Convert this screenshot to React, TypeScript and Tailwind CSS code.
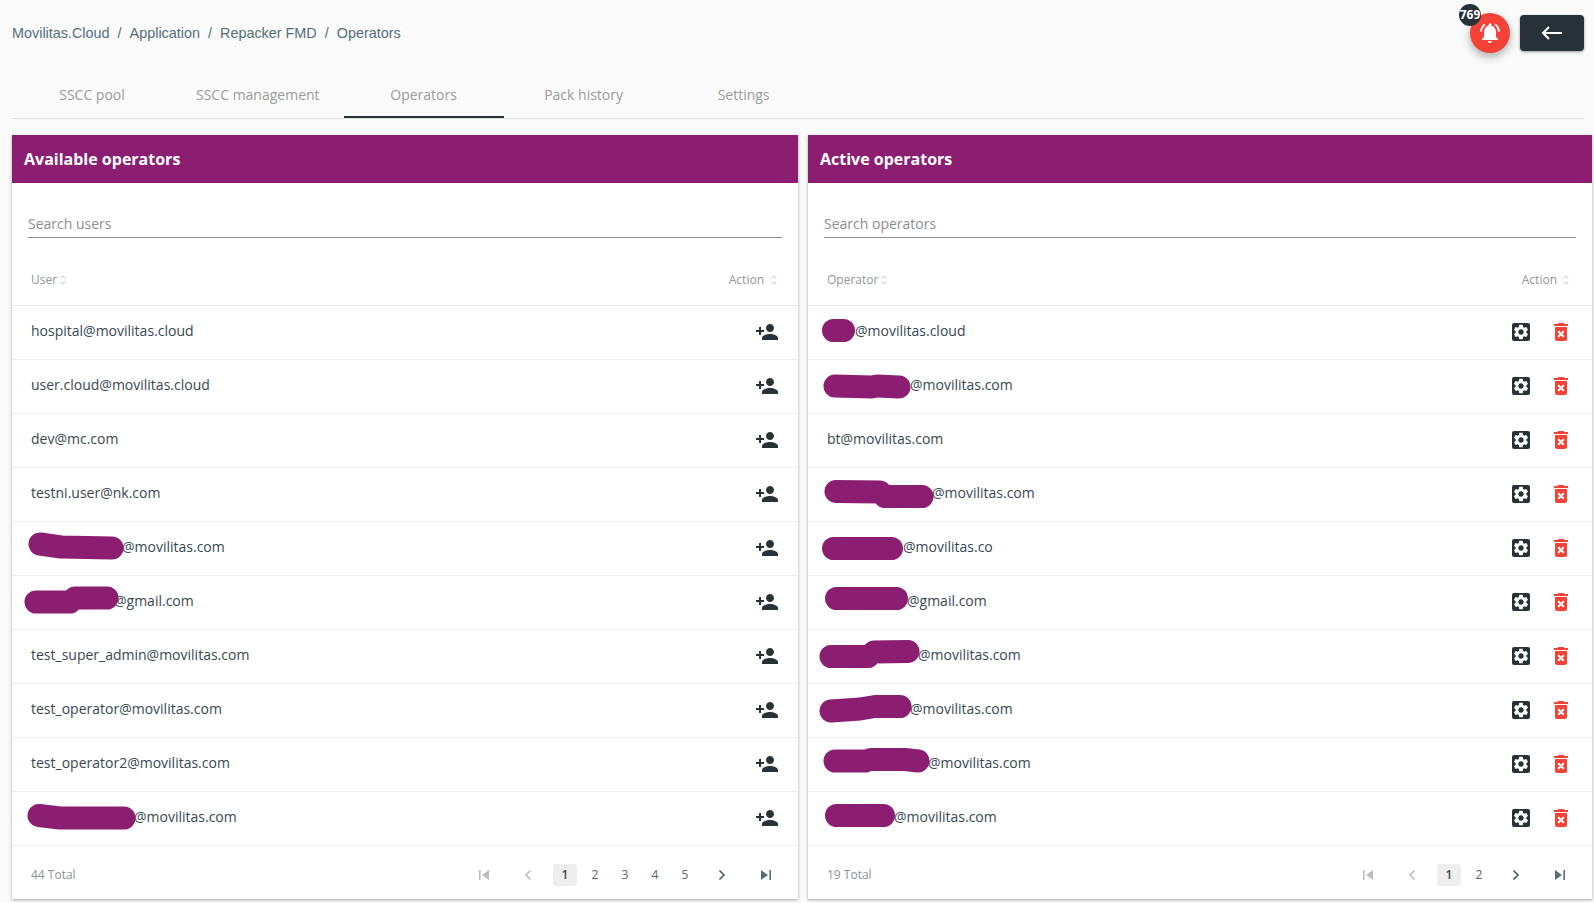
import { MdDeleteForever, MdNotificationsActive, MdPersonAdd, MdSettings } from "react-icons/md";

type Row = { domain: string; name?: string; width?: number; scribble?: string };

const availableUsers: Row[] = [
    { name: "hospital", domain: "@movilitas.cloud" },
    { name: "user.cloud", domain: "@movilitas.cloud" },
    { name: "dev", domain: "@mc.com" },
    { name: "testni.user", domain: "@nk.com" },
    { width: 91, scribble: "M9 9L30 12L81 13", domain: "@movilitas.com" },
    { width: 83, scribble: "M5 13L39 13M44 9L76 9", domain: "@gmail.com" },
    { name: "test_super_admin", domain: "@movilitas.com" },
    { name: "test_operator", domain: "@movilitas.com" },
    { name: "test_operator2", domain: "@movilitas.com" },
    { width: 103, scribble: "M8 10.5L29 13L93 13", domain: "@movilitas.com" },
];

const activeOperators: Row[] = [
    { width: 28, scribble: "M6.5 11.5L16.5 11.5", domain: "@movilitas.cloud" },
    { width: 83, scribble: "M8 13L45 14M50 13L72 14", domain: "@movilitas.com" },
    { name: "bt", domain: "@movilitas.com" },
    { width: 105, scribble: "M9 10.5L53 11M58 15.5L95 15.5", domain: "@movilitas.com" },
    { width: 76, scribble: "M6.5 13.5L64.5 13.5", domain: "@movilitas.co" },
    { width: 80, scribble: "M9.5 9.5L69.5 9.5", domain: "@gmail.com" },
    { width: 91, scribble: "M4 13.5L41 13.5M47 9L81 8.5", domain: "@movilitas.com" },
    { width: 83, scribble: "M4 14L33 12L48 9.5L73 9.5", domain: "@movilitas.com" },
    { width: 101, scribble: "M8 10L38 10M44 8.5L78 8.5L91 10", domain: "@movilitas.com" },
    { width: 67, scribble: "M9.5 10.5L56.5 10.5", domain: "@movilitas.com" },
];

function SortIcon() {
    return (
        <svg width="6" height="10" viewBox="0 0 6 10" fill="none" stroke="#bdbdbd" strokeWidth="1">
            <path d="M.8 3.5L3 1.2L5.2 3.5" />
            <path d="M.8 6.5L3 8.8L5.2 6.5" />
        </svg>
    );
}

function Email({ row }: { row: Row }) {
    return (
        <div className="flex items-center text-[14px] text-[#37474f]">
            <span className="order-2">{row.name}{row.domain}</span>
            {row.scribble && (
                <svg width={row.width} height="24" className="order-1 relative z-10 shrink-0 overflow-visible" fill="none">
                    <path d={row.scribble} stroke="#8b1e70" strokeWidth="23" strokeLinecap="round" strokeLinejoin="round" />
                </svg>
            )}
        </div>
    );
}

function Pager({ pages }: { pages: number[] }) {
    return (
        <div className="flex items-center">
            <button className="w-6 h-[22px] mr-5 flex items-center justify-center">
                <svg width="12" height="12" viewBox="0 0 12 12" fill="#bdbdbd"><path d="M1 1h1.6v10H1zM11 1v10L4 6z" /></svg>
            </button>
            <button className="w-6 h-[22px] mr-[13px] flex items-center justify-center">
                <svg width="10" height="12" viewBox="0 0 10 12" fill="none" stroke="#bdbdbd" strokeWidth="1.6"><path d="M7.5 1.5L3 6l4.5 4.5" /></svg>
            </button>
            <div className="flex items-center gap-[6px] text-[12px] text-[#616161]">
                {pages.map((p) => (
                    <span
                        key={p}
                        className={
                            p === 1
                                ? "w-6 h-[22px] flex items-center justify-center rounded-[3px] bg-[#eeeeee] text-[#37474f] font-semibold"
                                : "w-6 h-[22px] flex items-center justify-center"
                        }
                    >
                        {p}
                    </span>
                ))}
            </div>
            <button className="w-6 h-[22px] ml-[13px] flex items-center justify-center">
                <svg width="10" height="12" viewBox="0 0 10 12" fill="none" stroke="#455a64" strokeWidth="1.6"><path d="M2.5 1.5L7 6l-4.5 4.5" /></svg>
            </button>
            <button className="w-6 h-[22px] ml-5 flex items-center justify-center">
                <svg width="12" height="12" viewBox="0 0 12 12" fill="#546e7a"><path d="M9.4 1H11v10H9.4zM1 1v10l7-5z" /></svg>
            </button>
        </div>
    );
}

function Panel({
    title,
    placeholder,
    column,
    rows,
    total,
    pages,
    widthClass,
    actions,
    actionHeadClass,
}: {
    title: string;
    placeholder: string;
    column: string;
    rows: Row[];
    total: string;
    pages: number[];
    widthClass: string;
    actions: React.ReactNode;
    actionHeadClass: string;
}) {
    return (
        <section className={`${widthClass} bg-white shadow-[0_1px_3px_rgba(0,0,0,0.35)]`}>
            <div className="h-12 pl-3 flex items-center bg-[#8b1e70] text-white text-[16px] font-bold">{title}</div>

            <div className="h-[55px] mx-4 flex items-end">
                <div className="w-full pb-[3px] border-b border-[#8a8a8a] text-[14px] text-[#8d8d8d]">{placeholder}</div>
            </div>

            <div className="h-[68px] pt-[17px] flex items-center justify-between pl-[19px] border-b border-[#e4e4e4] text-[12px] text-[#90979b]">
                <div className="flex items-center gap-[3px]">{column}<SortIcon /></div>
                <div className={`flex items-center ${actionHeadClass}`}>Action<SortIcon /></div>
            </div>

            {rows.map((row, i) => (
                <div key={i} className="h-[54px] pb-1 px-[19px] flex items-center justify-between border-b border-[#eeeeee]">
                    <Email row={row} />
                    <div className="flex items-center pt-[2px]">{actions}</div>
                </div>
            ))}

            <div className="h-[53px] pt-1 pl-[19px] pr-5 flex items-center justify-between">
                <span className="text-[12px] text-[#8a9299]">{total}</span>
                <Pager pages={pages} />
            </div>
        </section>
    );
}

export default function App() {
    const tabs = ["SSCC pool", "SSCC management", "Operators", "Pack history", "Settings"];

    return (
        <div className="min-h-screen bg-[#fafafa] pl-3 pr-[2px] font-['Open_Sans',sans-serif]">
            {/* Top bar */}
            <header className="h-[66px] pr-2 flex items-center justify-between">
                <nav className="pt-[2px] flex items-center gap-2 text-[14.4px] text-[#546e7a] font-['Liberation_Sans',sans-serif]">
                    <span>Movilitas.Cloud</span><span>/</span>
                    <span>Application</span><span>/</span>
                    <span>Repacker FMD</span><span>/</span>
                    <span>Operators</span>
                </nav>
                <div className="flex items-center gap-[10px]">
                    <div className="relative w-10 h-10 rounded-full bg-[#f44336] flex items-center justify-center shadow-[0_4px_8px_rgba(0,0,0,0.3)]">
                        <MdNotificationsActive size={24} color="#fff" />
                        <span className="absolute -left-[11px] -top-[9px] w-[22px] h-[22px] rounded-full bg-[#263238] text-white text-[12px] font-bold flex items-center justify-center">769</span>
                    </div>
                    <button className="w-16 h-9 rounded-[4px] bg-[#263238] flex items-center justify-center shadow-[0_1px_3px_rgba(0,0,0,0.4)]">
                        <svg width="22" height="14" viewBox="0 0 22 14" fill="none" stroke="#fff" strokeWidth="2"><path d="M21 7H2M8 1L2 7l6 6" /></svg>
                    </button>
                </div>
            </header>

            {/* Tabs */}
            <div className="mr-2 h-[53px] flex border-b border-[#e0e0e0] text-[14px] text-[#9a9a9a]">
                {tabs.map((tab) => (
                    <div
                        key={tab}
                        className={
                            tab === "Operators"
                                ? "min-w-40 px-6 pt-[18px] text-center border-b-2 border-[#263238]"
                                : "min-w-40 px-6 pt-[18px] text-center"
                        }
                    >
                        {tab}
                    </div>
                ))}
            </div>

            {/* Tables */}
            <div className="mt-4 flex gap-[10px]">
                <Panel
                    title="Available operators"
                    placeholder="Search users"
                    column="User"
                    rows={availableUsers}
                    total="44 Total"
                    pages={[1, 2, 3, 4, 5]}
                    widthClass="w-[786px]"
                    actionHeadClass="gap-[7px] pr-[21px]"
                    actions={<MdPersonAdd size={24} color="#263238" />}
                />
                <Panel
                    title="Active operators"
                    placeholder="Search operators"
                    column="Operator"
                    rows={activeOperators}
                    total="19 Total"
                    pages={[1, 2]}
                    widthClass="w-[784px]"
                    actionHeadClass="gap-[6px] pr-[23px]"
                    actions={
                        <>
                            <span className="w-[18px] h-[18px] mr-[19px] rounded-[2px] bg-[#263238] flex items-center justify-center">
                                <MdSettings size={18} color="#fff" />
                            </span>
                            <MdDeleteForever size={24} color="#f44336" />
                        </>
                    }
                />
            </div>
        </div>
    );
}
